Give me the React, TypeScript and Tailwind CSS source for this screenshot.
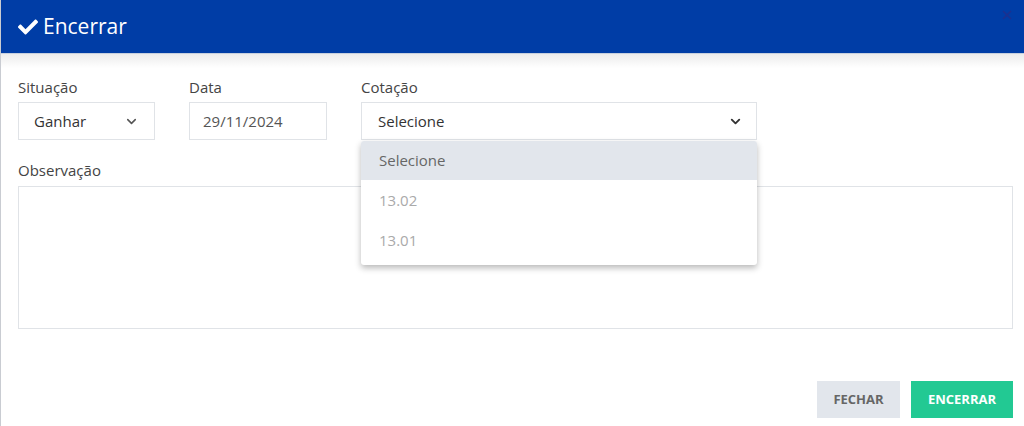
import { ChevronDown, X } from "lucide-react";

const font = { fontFamily: '"Open Sans", "Noto Sans", sans-serif' };

function Label({ children }: { children: React.ReactNode }) {
  return <div className="text-[15px] leading-5 text-[#444] mb-[5px]">{children}</div>;
}

function CheckIcon() {
  return (
    <svg viewBox="0 0 512 512" className="w-[20px] h-[20px] mr-[5px] fill-white">
      <path d="M173.898 439.404l-166.4-166.4c-9.997-9.997-9.997-26.206 0-36.204l36.203-36.204c9.997-9.998 26.207-9.998 36.204 0L192 312.69 432.095 72.596c9.997-9.997 26.207-9.997 36.204 0l36.203 36.204c9.997 9.997 9.997 26.206 0 36.204l-294.4 294.401c-9.998 9.997-26.207 9.997-36.204-.001z" />
    </svg>
  );
}

export default function App() {
  return (
    <div className="w-[1024px] h-[426px] bg-[#c9ccd2] pl-px overflow-hidden" style={font}>
      <div className="h-full bg-white flex flex-col">
        <header className="h-[54px] bg-[#003da6] flex items-center pl-[17px] pr-[10px] shrink-0 border-b border-[#c7d0de]">
          <CheckIcon />
          <h1 className="text-[21px] text-white leading-none">Encerrar</h1>
          <X className="ml-auto -mt-[24px] w-[14px] h-[14px] text-[#1a3190]" strokeWidth={3} />
        </header>
        <div className="h-[14px] bg-gradient-to-b from-[#ececec] to-white shrink-0" />

        <main className="pt-[9px] pl-[17px] pr-[11px] flex-1 flex flex-col">
          <div className="flex">
            <div className="w-[171px]">
              <Label>Situação</Label>
              <div className="w-[137px] h-[38px] border border-[#e0e3e7] flex items-center pl-[15px] pr-[15px] text-[15px] text-[#333]">
                Ganhar
                <ChevronDown className="ml-auto w-[15px] h-[15px] text-[#555]" strokeWidth={2.5} />
              </div>
            </div>
            <div className="w-[172px]">
              <Label>Data</Label>
              <div className="w-[138px] h-[38px] border border-[#e0e3e7] flex items-center pl-[13px] text-[15px] text-[#555]">
                29/11/2024
              </div>
            </div>
            <div className="w-[396px] relative">
              <Label>Cotação</Label>
              <div className="w-[396px] h-[38px] border border-[#e0e3e7] flex items-center pl-[16px] pr-[13px] text-[15px] text-[#333]">
                Selecione
                <ChevronDown className="ml-auto w-[15px] h-[15px] text-[#333]" strokeWidth={3} />
              </div>
              <ul className="absolute z-10 left-0 top-full mt-px w-[396px] bg-white rounded-[3px] shadow-[0_3px_6px_rgba(0,0,0,0.28)] pb-[5px] text-[15px]">
                <li className="h-[39px] bg-[#e2e6ec] flex items-center pl-[18px] text-[#666] rounded-t-[3px]">Selecione</li>
                <li className="h-[40px] flex items-center pl-[18px] text-[#aaa]">13.02</li>
                <li className="h-[40px] flex items-center pl-[18px] text-[#aaa]">13.01</li>
              </ul>
            </div>
          </div>

          <div className="mt-[20px] mb-[1px]">
            <Label>Observação</Label>
          </div>
          <div className="h-[143px] border border-[#e0e3e7]" />

          <div className="mt-auto mb-[8px] flex justify-end gap-[11px]">
            <button className="w-[83px] h-[37px] bg-[#e2e6ec] text-[#666] text-[13px] font-bold">FECHAR</button>
            <button className="w-[102px] h-[37px] bg-[#22c993] text-white text-[13px] font-bold">ENCERRAR</button>
          </div>
        </main>
      </div>
    </div>
  );
}
